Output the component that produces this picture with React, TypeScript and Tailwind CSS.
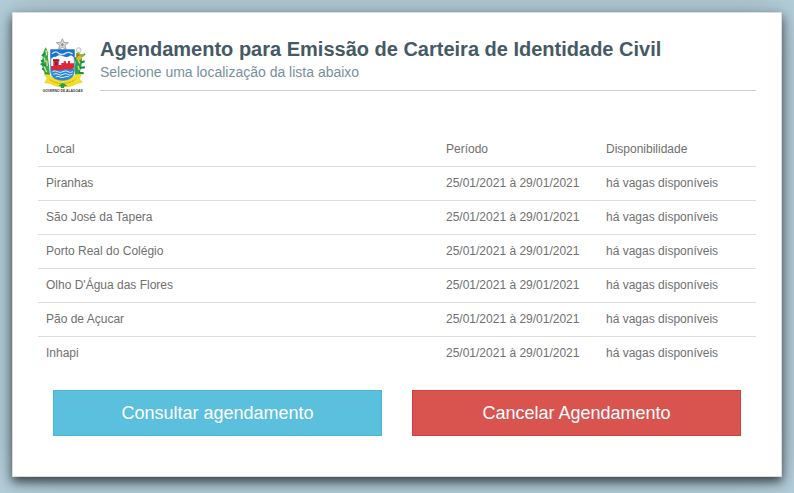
const locations = [
  'Piranhas',
  'São José da Tapera',
  'Porto Real do Colégio',
  "Olho D'Água das Flores",
  'Pão de Açucar',
  'Inhapi',
];

function Emblem() {
  return (
    <svg
      viewBox="20 22 138 165"
      className="h-[55px] w-[46px] shrink-0"
      role="img"
      aria-label="Governo de Alagoas"
    >
      {/* star */}
      <path
        d="M87 24l5 11 13 1-10 8 4 13-12-7-12 7 4-13-10-8 13-1z"
        fill="#d5d8db"
        stroke="#858b90"
        strokeWidth="2"
      />
      <circle cx="87" cy="42" r="4" fill="#8d9296" />
      {/* sugar cane */}
      <path
        d="M37 50c6 8 8 18 7 30l3 24 3 30-12 3-8-18-5-20 4-24 2-14z"
        fill="#35ab55"
      />
      <path
        d="M36 66l-10 10m10 10l-13 6m15 12l-16-4m18 20l-14-6m20 18l-12-4"
        stroke="#15964a"
        strokeWidth="6"
        fill="none"
      />
      <path d="M38 58l2 16m-8 6l4 14m4-4l2 16m-10 2l8 16" stroke="#e6e27a" strokeWidth="4" />
      {/* cotton and maize */}
      <path
        d="M128 76l14-4 4 14-2 22-6 22-12 8-2-24z"
        fill="#2aa34c"
      />
      <path
        d="M138 80l17-10m-15 26l14-4m-15 20l16-2m-18 16l14 2M130 92l-6-12"
        stroke="#168b40"
        strokeWidth="6"
      />
      <path d="M134 88l6 10m-6 8l4 12" stroke="#e6e27a" strokeWidth="4" />
      <circle cx="136" cy="58" r="7" fill="#f4f4f1" stroke="#a8aca8" strokeWidth="2" />
      <path d="M128 68l8-4 6 7 13-2-6 10-12 4-9 8z" fill="#8db534" />
      <path d="M132 78l9-3 5 8-6 6-9-2z" fill="#f0b41f" />
      <path d="M131 70l7 3-7 6z" fill="#bd5c22" />
      {/* shield */}
      <path
        d="M52 57h71v62c0 20-14 32-35 38-22-6-36-18-36-38z"
        fill="#f8faff"
        stroke="#1261b7"
        strokeWidth="2"
      />
      <path d="M52 57h71v24c-5-3-8-9-14-5-7 4-12 3-21 0-9-4-15-2-21 3-5-3-9 2-15 6z" fill="#1873cf" />
      <path d="M56 69q12-10 20-1 10 7 20 0 10-7 22 2" stroke="#d5e6f7" strokeWidth="4" fill="none" />
      <path
        d="M53 114h69v8c-1 18-14 29-34 34-20-5-34-16-35-34z"
        fill="#2887d8"
      />
      <path
        d="M57 123q9-5 16 0t16 0 15 0 15 0M60 131q8-5 15 0t14 0 14 0 14 0M67 139q7-4 13 0t14 0 14 0"
        stroke="#d9edfb"
        strokeWidth="3"
        fill="none"
      />
      {/* fortress */}
      <path
        d="M53 106h7V86h4v4h4v-4h4v4h4v13h8v-6h7v-5h7v6h6v-7h6v7h12v14q-9 6-18 4-10-3-20 2-14 2-31-2z"
        fill="#e32633"
      />
      <path d="M59 86h19v6H59zM65 95h8v9h-8z" fill="#89242b" />
      {/* ribbon */}
      <path
        d="M32 130l16 2c16 22 60 26 79-1l18-1-7 14 10 11-18 4c-14 8-26 10-40 10-16 0-27-3-38-10l-18-3 7-13z"
        fill="#f5df25"
        stroke="#d4b52b"
        strokeWidth="1"
      />
      <path d="M49 146c18 16 57 17 77 0" stroke="#a8962a" strokeWidth="3" fill="none" strokeDasharray="3 2" />
      <path d="M75 165l13-8 14 8-9 2-1 5h-9l-1-5z" fill="#22a04a" />
      <text
        x="88"
        y="183"
        textAnchor="middle"
        fill="#333333"
        className="font-['Liberation_Sans',Arial,sans-serif] text-[10px] font-bold"
      >
        GOVERNO DE ALAGOAS
      </text>
    </svg>
  );
}

export default function App() {
  return (
    <div className="min-h-screen bg-[#b4cfdb] p-3 pb-4 font-['Liberation_Sans',Arial,sans-serif]">
      <main className="border border-[#dcdcdc] bg-white px-[25px] pt-[25px] pb-10 shadow-[0_0_40px_rgba(0,0,0,0.2),0_5px_10px_rgba(0,0,0,0.65)]">
        <header className="flex gap-[14px] pl-[2px]">
          <Emblem />
          <div className="mb-[2px] flex-1 border-b border-[#cccccc]">
            <h1 className="text-xl leading-[22px] font-bold text-[#455a64]">
              Agendamento para Emissão de Carteira de Identidade Civil
            </h1>
            <p className="text-sm leading-6 text-[#78909c]">
              Selecione uma localização da lista abaixo
            </p>
          </div>
        </header>

        <table className="mt-10 w-full table-fixed border-collapse text-left text-xs leading-[17px] text-[#707070]">
          <thead>
            <tr className="border-b border-[#dddddd]">
              <th scope="col" className="px-2 py-2 font-normal">Local</th>
              <th scope="col" className="w-40 px-2 py-2 font-normal">Período</th>
              <th scope="col" className="w-[158px] px-2 py-2 font-normal">Disponibilidade</th>
            </tr>
          </thead>
          <tbody>
            {locations.map((name) => (
              <tr key={name} className="border-b border-[#dddddd] last:border-b-0">
                <td className="px-2 py-2">{name}</td>
                <td className="px-2 py-2">25/01/2021 à 29/01/2021</td>
                <td className="px-2 py-2">há vagas disponíveis</td>
              </tr>
            ))}
          </tbody>
        </table>

        <div className="mt-5 grid grid-cols-2 gap-[30px] px-[15px] text-lg leading-6 text-white">
          <button type="button" className="border border-[#46b8da] bg-[#5bc0de] px-4 py-[10px]">
            Consultar agendamento
          </button>
          <button type="button" className="border border-[#d43f3a] bg-[#d9534f] px-4 py-[10px]">
            Cancelar Agendamento
          </button>
        </div>
      </main>
    </div>
  );
}
